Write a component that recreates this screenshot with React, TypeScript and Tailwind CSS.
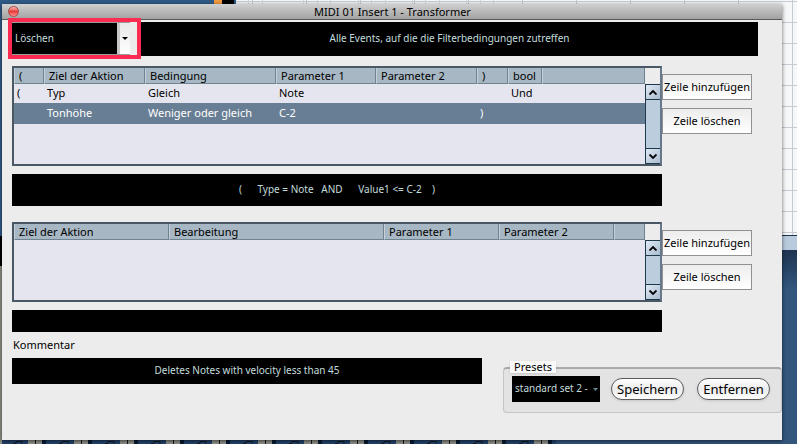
import { useState } from 'react';
import type { ReactNode } from 'react';

interface Column {
  label: string;
  width?: number;
}

interface EventTableProps {
  caption: string;
  columns: Column[];
  rows: string[][];
  selectedRow?: number;
  bodyClass: string;
}

const FILTER_COLUMNS: Column[] = [
  { label: '(', width: 30 },
  { label: 'Ziel der Aktion', width: 101 },
  { label: 'Bedingung', width: 131 },
  { label: 'Parameter 1', width: 100 },
  { label: 'Parameter 2', width: 101 },
  { label: ')', width: 31 },
  { label: 'bool', width: 34 },
  { label: '' },
];

const FILTER_ROWS = [
  ['(', 'Typ', 'Gleich', 'Note', '', '', 'Und', ''],
  ['', 'Tonhöhe', 'Weniger oder gleich', 'C-2', '', ')', '', ''],
];

const ACTION_COLUMNS: Column[] = [
  { label: 'Ziel der Aktion', width: 155 },
  { label: 'Bearbeitung', width: 215 },
  { label: 'Parameter 1', width: 115 },
  { label: 'Parameter 2', width: 115 },
  { label: '' },
];

const Chevron = ({ up }: { up?: boolean }) => (
  <svg viewBox="0 0 8 5" className="h-[5px] w-2" fill="none" stroke="#000" strokeWidth="1.8">
    <path d={up ? 'M0.5 4.5L4 1L7.5 4.5' : 'M0.5 0.5L4 4L7.5 0.5'} />
  </svg>
);

const Scrollbar = () => (
  <div className="flex w-[15px] shrink-0 flex-col">
    <div className="h-4 bg-[#ececec]" />
    <div className="flex flex-1 flex-col border-l border-[#1d3a4c] bg-[#bccddd]">
      <button
        type="button"
        aria-label="Nach oben"
        className="flex h-4 items-center justify-center border-y border-[#1d3a4c] bg-linear-to-br from-[#dfe9f4] to-[#a9bccf]"
      >
        <Chevron up />
      </button>
      <div className="flex-1" />
      <button
        type="button"
        aria-label="Nach unten"
        className="flex h-4 items-center justify-center border-y border-[#1d3a4c] bg-linear-to-br from-[#dfe9f4] to-[#a9bccf]"
      >
        <Chevron />
      </button>
    </div>
  </div>
);

const EventTable = ({ caption, columns, rows, selectedRow, bodyClass }: EventTableProps) => (
  <div className={`flex min-w-0 flex-1 border-2 border-[#4a5764] border-r-[#66788a] bg-[#e5e5ef] ${bodyClass}`}>
    <div className="min-w-0 flex-1">
      <table
        aria-label={caption}
        className="w-full table-fixed border-separate border-spacing-0 text-left text-[11px] leading-4"
      >
        <colgroup>
          {columns.map((column, i) => (
            <col key={i} style={{ width: column.width }} />
          ))}
        </colgroup>
        <thead>
          <tr>
            {columns.map((column, i) => (
              <th
                key={i}
                className="h-4 border-r border-b border-l border-r-[#6f8391] border-b-[#6f8391] border-l-[#c3d0d9] bg-[#a7b7c3] p-0 pl-1 leading-[15px] font-normal whitespace-nowrap"
              >
                {column.label}
              </th>
            ))}
          </tr>
        </thead>
        <tbody>
          {rows.map((row, r) => (
            <tr key={r} className={r === selectedRow ? 'h-[21px] bg-[#687e94] text-white' : 'h-[19px]'}>
              {row.map((cell, c) => (
                <td key={c} className="p-0 pb-0.5 pl-[3px] whitespace-nowrap">
                  {cell}
                </td>
              ))}
            </tr>
          ))}
        </tbody>
      </table>
    </div>
    <Scrollbar />
  </div>
);

const RowButton = ({ children }: { children: ReactNode }) => (
  <button
    type="button"
    className="h-[26px] w-[90px] border border-[#919191] bg-linear-to-b from-[#ededed] to-white text-[11px] leading-4 whitespace-nowrap"
  >
    {children}
  </button>
);

const RowButtons = () => (
  <div className="mt-2 mr-[30px] flex shrink-0 flex-col gap-2">
    <RowButton>Zeile hinzufügen</RowButton>
    <RowButton>Zeile löschen</RowButton>
  </div>
);

const PillButton = ({ children }: { children: ReactNode }) => (
  <button
    type="button"
    className="h-[22px] w-[73px] rounded-full border border-[#5c5c5c] bg-linear-to-b from-white via-[#ececec] to-white text-[13px] leading-4 shadow-sm"
  >
    {children}
  </button>
);

const Desktop = () => (
  <svg className="absolute inset-0 h-full w-full" aria-hidden="true">
    <defs>
      <pattern id="grid" x="792" y="22" width="54" height="21" patternUnits="userSpaceOnUse">
        <rect width="54" height="21" fill="#f6f7f9" />
        <path d="M0 0.5H54M0.5 0V21" stroke="#c5cbd2" />
      </pattern>
      <pattern id="tracks" x="2" y="440" width="46" height="4" patternUnits="userSpaceOnUse">
        <rect width="46" height="4" fill="#23426b" />
        <rect x="26" width="14" height="4" fill="#8f9086" />
        <rect x="40" width="4" height="4" fill="#071a33" />
        <path d="M11 3.5H14V1.5H20V4M33.5 0V4" stroke="#15181f" fill="none" />
      </pattern>
      <linearGradient id="blue" x1="0" y1="0" x2="0" y2="1">
        <stop offset="0" stopColor="#1f3550" />
        <stop offset="0.2" stopColor="#33567d" />
      </linearGradient>
    </defs>
    <rect width="236" height="236" fill="#2f5a87" />
    <rect x="214" width="8" height="4" fill="#f29a3e" />
    <rect x="222" width="12" height="4" fill="#000" />
    <rect x="236" width="100%" height="235" fill="url(#grid)" />
    <path
      d="M248.5 0V4M262.5 0V4M303.5 0V4M317.5 0V4M330.5 0V4M358.5 0V4M371.5 0V4M385.5 0V4M412.5 0V4M425.5 0V4M439.5 0V4M466.5 0V4M480.5 0V4M493.5 0V4"
      stroke="#d3dadd"
    />
    <rect y="236" width="2" height="30" fill="#000" />
    <rect y="266" width="2" height="100%" fill="#8f9184" />
    <rect x="782" y="235" width="100%" height="15" fill="#b8cade" />
    <path d="M782 235.5H2000M782 250.5H2000" stroke="#1c3047" />
    <rect x="556" y="250" width="100%" height="194" fill="url(#blue)" />
    <rect x="2" y="440" width="554" height="4" fill="url(#tracks)" />
  </svg>
);

const App = () => {
  const [action, setAction] = useState('Löschen');
  const [preset, setPreset] = useState('standard set 2');
  const [comment, setComment] = useState('Deletes Notes with velocity less than 45');

  return (
    <div className="relative min-h-screen overflow-hidden bg-[#33567d] pt-1 pr-[15px] pb-1 pl-0.5 font-['Noto_Sans',sans-serif] text-[11px] leading-4 text-black">
      <Desktop />
      <main className="relative bg-[#ececec] pb-[27px] shadow-[0_1px_4px_rgba(0,0,0,0.6)]">
        <header className="flex h-4 items-center border-b border-[#5a5a5a] bg-linear-to-b from-[#d0d0d0] to-[#a2a2a2] pl-1.5">
          <button
            type="button"
            aria-label="Schließen"
            className="h-[11px] w-[11px] rounded-full border border-[#a84a4a] bg-linear-to-b from-[#f9b4b4] via-[#e63a3a] to-[#ff8a8a]"
          />
          <h1 className="flex-1 pr-4 text-center text-[11px] leading-4">MIDI 01 Insert 1 - Transformer</h1>
        </header>

        <div className="mt-0.5 mr-6 ml-[10px] flex h-[34px] bg-black text-[#c3dcdc]">
          <div className="-mt-1 -ml-1 h-[41px] w-[133px] shrink-0 border-4 border-[#fb2b52] bg-[#ececec]">
            <div className="flex h-[33px] w-[118px] border-y border-[#9a9a9a] bg-black">
              <select
                aria-label="Funktion"
                value={action}
                onChange={(e) => setAction(e.target.value)}
                className="w-[105px] appearance-none bg-black pb-0.5 pl-[3px] text-[10px] text-[#c3dcdc]"
              >
                <option>Löschen</option>
              </select>
              <span className="flex flex-1 items-center justify-center border-l-[3px] border-[#c8c8c8] bg-linear-to-b from-[#e8e8e8] to-white">
                <svg viewBox="0 0 6 3" className="h-[3px] w-1.5">
                  <path d="M0 0H6L3 3Z" />
                </svg>
              </span>
            </div>
          </div>
          <p className="flex flex-1 items-center justify-center pb-0.5 text-[10px]">
            Alle Events, auf die die Filterbedingungen zutreffen
          </p>
        </div>

        <section className="mt-[10px] ml-[10px] flex">
          <EventTable
            caption="Filterbedingungen"
            columns={FILTER_COLUMNS}
            rows={FILTER_ROWS}
            selectedRow={1}
            bodyClass="h-[100px]"
          />
          <RowButtons />
        </section>

        <p className="mt-2 mr-[120px] ml-[10px] flex h-8 items-center justify-center bg-black pb-0.5 text-[10px] whitespace-pre text-[#c3dcdc]">
          {'(      Type = Note   AND      Value1 <= C-2    )'}
        </p>

        <section className="mt-4 ml-[10px] flex">
          <EventTable caption="Aktionen" columns={ACTION_COLUMNS} rows={[]} bodyClass="h-20" />
          <RowButtons />
        </section>

        <div className="mt-2 mr-[120px] ml-[10px] h-[22px] bg-black" />

        <div className="ml-[10px] flex">
          <div className="flex-1 pt-[5px]">
            <label htmlFor="comment" className="block pl-px">
              Kommentar
            </label>
            <input
              id="comment"
              value={comment}
              onChange={(e) => setComment(e.target.value)}
              className="mt-[5px] block h-[26px] w-full bg-black pb-0.5 text-center text-[10px] text-[#c3dcdc]"
            />
          </div>
          <fieldset className="relative mt-[35px] ml-[21px] flex h-[46px] w-[279px] shrink-0 items-center rounded border border-t-2 border-[#c4c4c4] border-t-[#aaaaaa] bg-[#e3e3e3] pb-1 pl-2">
            <legend className="absolute -top-2 left-1.5 h-3 bg-[#f8f8f8] px-1 leading-3 shadow">Presets</legend>
            <div className="relative h-[26px] w-[88px]">
              <select
                aria-label="Preset"
                value={preset}
                onChange={(e) => setPreset(e.target.value)}
                className="h-full w-full appearance-none bg-black pb-0.5 pl-[3px] text-[10px] text-[#c3dcdc]"
              >
                <option value="standard set 2">standard set 2 -</option>
              </select>
              <svg viewBox="0 0 5 3" className="pointer-events-none absolute top-3 right-0.5 h-[3px] w-[5px]">
                <path d="M0 0H5L2.5 3Z" fill="#5f8794" />
              </svg>
            </div>
            <div className="ml-[11px] flex gap-[13px]">
              <PillButton>Speichern</PillButton>
              <PillButton>Entfernen</PillButton>
            </div>
          </fieldset>
        </div>
      </main>
    </div>
  );
};

export default App;
